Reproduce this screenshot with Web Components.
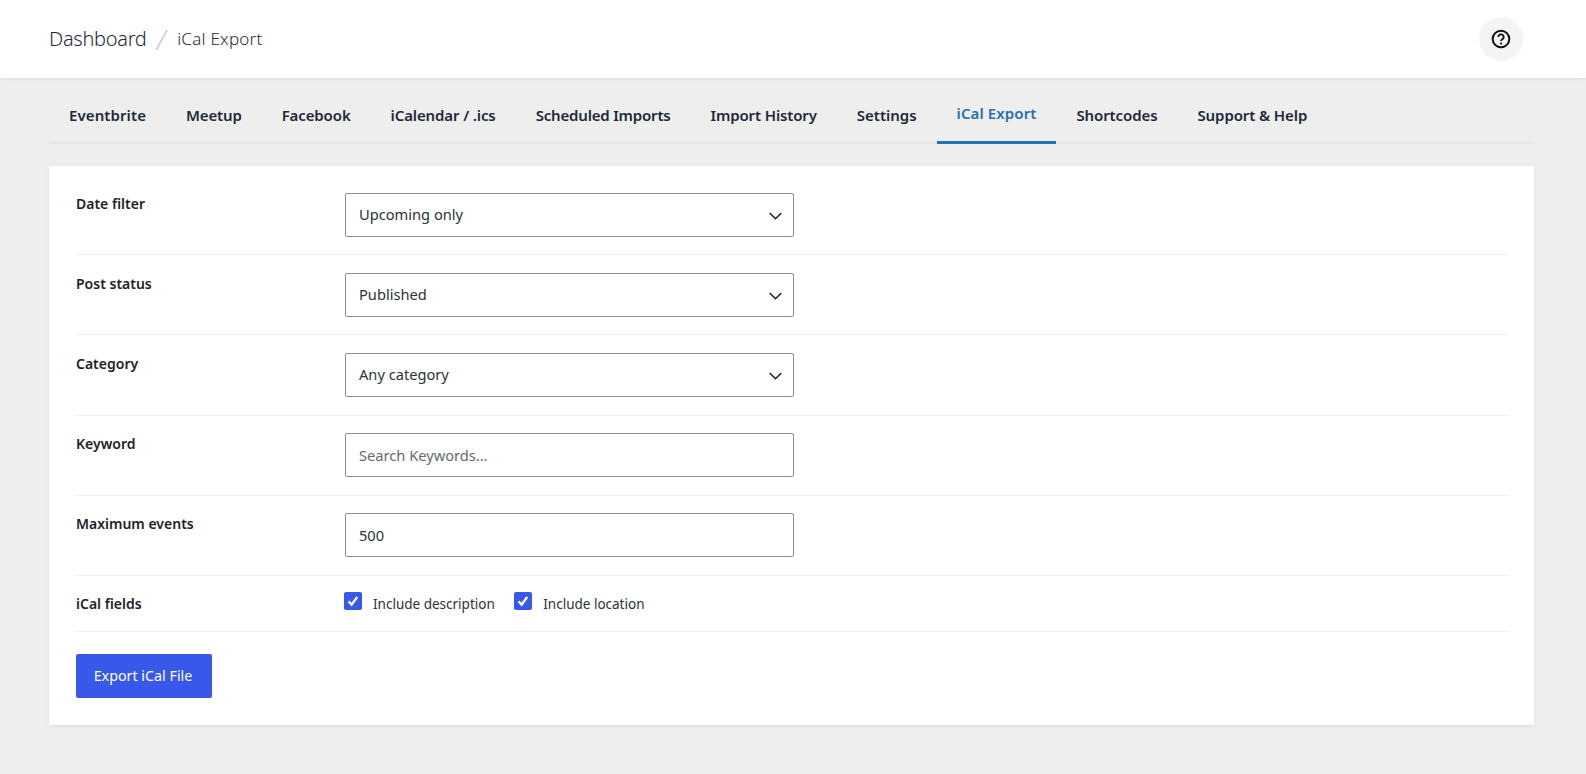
<!DOCTYPE html>
<html><head><meta charset="utf-8"><title>iCal Export</title>
<style>
html,body{margin:0;padding:0;background:#eee;height:100%}
body{font-family:"Noto Sans","Open Sans",sans-serif;color:#1d2327;overflow:hidden}
</style></head><body>
<app-header></app-header>
<app-tabs>
  <tab-item style="--ls:.1px">Eventbrite</tab-item><tab-item style="--ls:-.15px">Meetup</tab-item><tab-item style="--ls:-.12px">Facebook</tab-item><tab-item style="--ls:-.12px">iCalendar / .ics</tab-item><tab-item style="--ls:-.18px">Scheduled Imports</tab-item><tab-item style="--ls:-.14px">Import History</tab-item><tab-item>Settings</tab-item><tab-item active style="--ls:.1px">iCal Export</tab-item><tab-item style="--ls:-.1px">Shortcodes</tab-item><tab-item style="--ls:-.1px">Support &amp; Help</tab-item>
</app-tabs>
<form-card>
  <form-row label="Date filter"><field-box chevron>Upcoming only</field-box></form-row>
  <form-row label="Post status"><field-box chevron>Published</field-box></form-row>
  <form-row label="Category"><field-box chevron>Any category</field-box></form-row>
  <form-row label="Keyword"><field-box placeholder>Search Keywords...</field-box></form-row>
  <form-row label="Maximum events"><field-box>500</field-box></form-row>
  <form-row label="iCal fields" compact><check-item>Include description</check-item><check-item>Include location</check-item></form-row>
  <action-button>Export iCal File</action-button>
</form-card>
<script>
function def(name, html, init){
  customElements.define(name, class extends HTMLElement{
    constructor(){super();this.attachShadow({mode:'open'}).innerHTML=html;}
    connectedCallback(){ if(init) init(this); }
  });
}
def('app-header',`<style>
:host{display:flex;align-items:center;justify-content:space-between;height:78px;box-sizing:border-box;background:#fff;padding:0 63px 0 49px;box-shadow:0 1px 4px rgba(0,0,0,.08);position:relative}
.crumb{display:flex;align-items:center;color:#1e293b}
.a{font-size:20px;font-weight:300;letter-spacing:-.3px;padding-bottom:2px}
.s{font-size:27px;font-weight:300;color:#c9cacf;margin:0 11.7px 0 10px;line-height:1;font-style:italic}
.b{font-size:17px;font-weight:300;letter-spacing:.25px;padding-bottom:2px}
.help{width:44px;height:44px;border-radius:50%;background:#f3f4f6;display:flex;align-items:center;justify-content:center}
</style><div class="crumb"><span class="a">Dashboard</span><span class="s">/</span><span class="b">iCal Export</span></div>
<div class="help"><svg width="20" height="20" viewBox="0 0 20 20" fill="none" stroke="#111" stroke-width="2"><circle cx="10" cy="10" r="8.3"/><path d="M7.4 8a2.6 2.6 0 1 1 3.9 2.2c-.9.5-1.3 1-1.3 1.8" stroke-width="1.8"/><circle cx="10" cy="14.6" r="1.1" fill="#111" stroke="none"/></svg></div>`);
def('app-tabs',`<style>
:host{display:flex;margin:21px 52px 0 49px;border-bottom:2px solid #e5e5e5;height:43px;box-sizing:content-box}
</style><slot></slot>`);
def('tab-item',`<style>
:host{display:block;padding:2px 20px 0;font-size:15px;font-weight:600;color:#1e293b;line-height:29px;white-space:nowrap;margin-bottom:-2px;box-sizing:border-box;height:45px;letter-spacing:var(--ls,0)}
:host([active]){color:#2271b1;border-bottom:3px solid #2271b1;padding-top:0}
</style><slot></slot>`);
def('form-card',`<style>
:host{display:block;margin:22px 52px 0 49px;background:#fff;padding:9px 26px 27px 27px;box-shadow:0 1px 3px rgba(0,0,0,.08)}
</style><slot></slot>`);
def('form-row',`<style>
:host{display:flex;border-bottom:1px solid #f0f0f1;padding:17.55px 0 17.65px}
:host([compact]){padding:2px 0 0;height:53px;align-items:center}
.l{width:269px;flex:none;font-size:14px;font-weight:600;color:#1d2327;line-height:20px}
:host(:not([compact])) .l{padding-top:1px}
.c{display:flex;gap:19.5px;align-items:center;flex:none}
:host([compact]) .c{margin-left:-1px}
</style><div class="l"></div><div class="c"><slot></slot></div>`, el=>{el.shadowRoot.querySelector('.l').textContent=el.getAttribute('label')});
def('field-box',`<style>
:host{display:flex;align-items:center;justify-content:space-between;width:449px;height:44px;box-sizing:border-box;border:1px solid #8c8f94;border-radius:2px;padding:0 13px;font-size:14.65px;color:#2c3338;background:#fff}
:host([chevron]){padding-bottom:2px}
:host([placeholder]){color:#646970}
svg{display:none}
:host([chevron]) svg{display:block;margin:4px -2px 0 0}
</style><slot></slot><svg width="13" height="8" viewBox="0 0 13 8" fill="none" stroke="#1d2327" stroke-width="1.6"><path d="M.7 1 6.5 6.7 12.3 1"/></svg>`);
def('check-item',`<style>
:host{display:inline-flex;align-items:center;gap:11px;font-size:13.5px;color:#2c3338}
.b{width:18px;height:18px;border-radius:2px;background:#3858e9;display:flex;align-items:center;justify-content:center;margin-top:-6px}
</style><span class="b"><svg width="14" height="14" viewBox="0 0 14 14" fill="none" stroke="#fff" stroke-width="2.4"><path d="M2.6 7.4 5.6 10.6 11.2 3"/></svg></span><span><slot></slot></span>`);
def('action-button',`<style>
:host{display:inline-flex;align-items:center;justify-content:center;width:136px;height:44px;box-sizing:border-box;padding-right:2px;margin-top:22px;background:#3858e9;color:#fff;border-radius:2px;font-size:14.3px;font-weight:400}
</style><slot></slot>`);
</script>
</body></html>
